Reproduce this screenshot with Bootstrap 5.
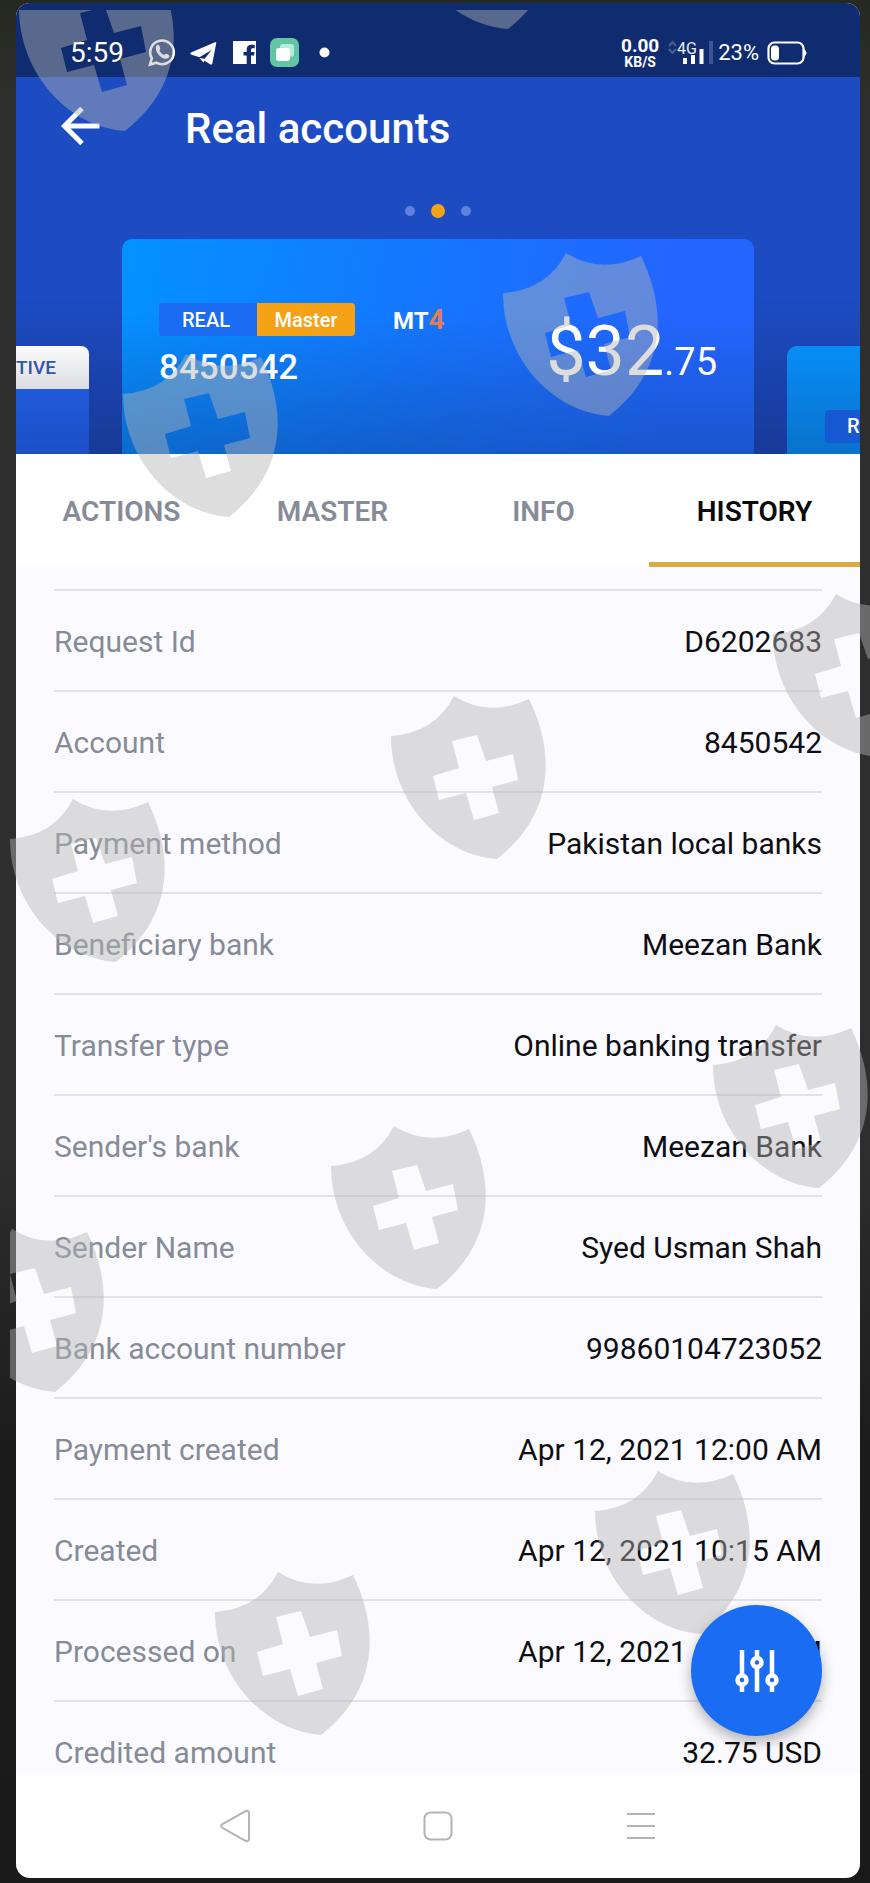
<!DOCTYPE html>
<html lang="en">
<head>
<meta charset="utf-8">
<meta name="viewport" content="width=device-width, initial-scale=1">
<title>Real accounts</title>
<link href="https://cdn.jsdelivr.net/npm/bootstrap@5.3.0/dist/css/bootstrap.min.css" rel="stylesheet">
<style>
  body { background: linear-gradient(#26291f 0, #2e2e2e 100px, #2e2e2e 1150px, #1c1c1c 1450px, #1a1a1a); font-family: Roboto, "Liberation Sans", sans-serif; overflow-x: hidden; }
  .stage { padding: 3px 10px 6px 16px; }
  .phone { border-radius: 14px; background: #fff; }
  .medium { font-weight: 500; }
  .status-bar { background: #0f2c70; height: 74px; padding: 26px 53px 0 54px; color: #fff; }
  .status-items { height: 48px; }
  .clock { font-size: 28px; line-height: 48px; width: 77px; }
  .rate { font-size: 19px; line-height: 18px; width: 40px; }
  .rate small { font-size: 14px; line-height: 14px; }
  .percent { font-size: 22px; line-height: 48px; }
  .hero { background: linear-gradient(#1c4bc2 0, #1c4bc2 220px, #183a98 377px); color: #fff; }
  .title-row { height: 100px; padding-left: 44px; }
  .title-row h1 { font-size: 42px; line-height: 56px; margin-left: 84px; padding-top: 4px; }
  .back-btn { width: 41px; height: 41px; color: #fff; }
  .dots { height: 62px; gap: 16px; padding-top: 5px; }
  .dots span { width: 10px; height: 10px; border-radius: 50%; background: #5f80dc; }
  .dots .on { width: 14px; height: 14px; background: #f5a314; }
  .slides { gap: 33px; height: 215px; }
  .side-slide { width: 73px; height: 108px; }
  .slide-prev { background: linear-gradient(#2260e8, #1d4fc6); border-radius: 0 8px 0 0; }
  .slide-prev div { height: 43px; border-radius: 0 8px 0 0; background: linear-gradient(#fbfbfb, #dcdde2); color: #2f55ad; font-size: 19px; line-height: 43px; }
  .slide-next { background: linear-gradient(#068df5, #0a72cc); border-radius: 10px 0 0 0; padding: 64px 0 0 38px; }
  .slide-next div { height: 33px; border-radius: 4px 0 0 4px; background: #1759d2; font-size: 20px; line-height: 33px; padding-left: 22px; }
  .slide-main { border-radius: 10px 10px 0 0; padding: 64px 37px 0; background: linear-gradient(rgba(16, 80, 160, 0) 35%, rgba(16, 70, 155, .5)), linear-gradient(100deg, #0492ff, #1477ff 45%, #2465ff 85%); }
  .tag { width: 98px; height: 33px; font-size: 20px; line-height: 34px; text-align: center; }
  .tag-real { background: #1b6bf3; border-radius: 4px 0 0 4px; padding-right: 4px; }
  .tag-master { background: #f5a216; border-radius: 0 4px 4px 0; }
  .platform { font-size: 24px; line-height: 34px; height: 34px; margin-left: 38px; }
  .platform span { color: #e27c5a; font-size: 28px; }
  .acct-no { font-size: 35px; line-height: 40px; margin-top: 11px; }
  .balance { font-size: 70px; line-height: 80px; margin-top: 8px; }
  .balance span { font-size: 38px; }
  .tab-link { height: 113px; font-size: 28px; line-height: 40px; padding-top: 38px; color: #868b97; text-decoration: none; border-bottom: 5px solid transparent; }
  .tab-link.current { color: #0a0a0a; border-color: #d9ab41; }
  .history { background: #fbfbff; padding: 22px 38px 1px; }
  .history table { font-size: 30px; line-height: 40px; color: #0e0e12; }
  .history th { color: #868b97; font-weight: 400; }
  .history th, .history td { border-top: 2px solid #e3e3e7; padding: 31px 0 28px; }
  .history tr:last-child > * { padding-bottom: 0; }
  .history td { text-align: right; }
  .fab { width: 131px; height: 131px; right: 38px; bottom: 38px; z-index: 3; border: 0; border-radius: 50%; background: #1a6df2; box-shadow: 0 6px 14px rgba(0, 0, 0, .3); color: #fff; }
  .nav-keys { height: 104px; }
  .nav-keys button { width: 24%; }
  .shields { z-index: 2; pointer-events: none; }
</style>
</head>
<body>
<div class="stage position-relative">
  <main class="phone overflow-hidden">
    <div class="status-bar">
      <div class="status-items d-flex align-items-center">
        <span class="clock">5:59</span>
        <svg width="184" height="30" viewBox="147 39 184 30" aria-hidden="true">
          <g fill="none" stroke="#fff" stroke-width="2.6"><path d="M150 65.500l1.800-6.200a11.800 11.800 0 1 1 4.500 4.400z"/></g>
          <path fill="#fff" d="M156.500 46.500c1-1 2.300-.8 2.800.3l1 2.400c.3.800-1.100 1.800-.8 2.500 1 2 2.500 3.300 4.400 4.100.8.300 1.700-1.400 2.500-1l2.300 1.100c1.300.7.600 2.500-.4 3.200-5.200 3.700-15-6.800-11.800-12.600z"/>
          <path fill="#fff" d="M191 53.500L215 43.300c1-.3 1.400.2 1.200 1.200L212.400 64c-.3 1.600-1.300 1.900-2.500 1.200l-6.200-4.300 7.800-10-12 7.300-7.900-2.500c-1.600-.5-1.700-1.500-.6-2.200z"/>
          <path fill="#fff" d="M199.500 59l4 4.500 2.500-3.500z"/>
          <path fill="#fff" fill-rule="evenodd" d="M233 42h23v23h-5V56.600h3l.5-3.600H251v-1.800c0-1.400.6-2 2-2h1.700v-3.400h-3c-3.300 0-5 1.900-5 4.900V53h-3.200v3.600h3.200V65H233z"/>
          <rect x="270" y="39" width="29" height="29" rx="7" fill="#62c6a4"/>
          <rect x="280" y="45" width="14" height="13" rx="3" fill="#b5eadb"/>
          <rect x="276" y="49" width="14" height="13" rx="3" fill="#fff"/>
          <circle cx="324.500" cy="53.500" r="5" fill="#fff"/>
        </svg>
        <div class="rate ms-auto d-flex flex-column align-items-center fw-bold">0.00<small>KB/S</small></div>
        <svg class="ms-2 me-1" width="46" height="26" viewBox="667 41 46 26" role="img" aria-label="4G signal">
          <g fill="none" stroke="#4a5f96" stroke-width="2"><path d="M668 47l3.500-4 3.500 4M668 50l3.500 4 3.500-4"/></g>
          <text x="676" y="55" font-size="16" fill="#e8ecf8" font-family="Roboto, sans-serif">4G</text>
          <g stroke="#fff" stroke-width="4"><path d="M684 65v-6M692 65v-9M700.500 65V50"/><path stroke="#3d5592" d="M710 65V42"/></g>
        </svg>
        <span class="percent">23%</span>
        <svg class="ms-2" width="40" height="24" viewBox="766 42 40 24" role="img" aria-label="Battery">
          <rect x="767.500" y="43.500" width="35" height="21" rx="6" fill="none" stroke="#fff" stroke-width="2.200"/>
          <rect x="770" y="46.500" width="8" height="15" rx="3.500" fill="#fff"/><path d="M803 50q5 4 0 8z" fill="#fff"/>
        </svg>
      </div>
    </div>

    <header class="hero">
      <div class="title-row d-flex align-items-center">
        <button class="back-btn btn p-0 border-0 d-flex" type="button" aria-label="Back">
          <svg width="41" height="41" viewBox="60 106 41 41" fill="none" stroke="currentColor" stroke-width="5"><path d="M99.500 125H65M82 107.500L64.500 125 82 142.500"/></svg>
        </button>
        <h1 class="mb-0 medium">Real accounts</h1>
      </div>
      <div class="dots d-flex justify-content-center align-items-center"><span></span><span class="on"></span><span></span></div>
      <div class="slides d-flex align-items-end">
        <div class="side-slide slide-prev flex-shrink-0"><div class="medium">TIVE</div></div>
        <section class="slide-main flex-fill align-self-stretch d-flex justify-content-between">
          <div>
            <div class="d-flex medium">
              <span class="tag tag-real">REAL</span><span class="tag tag-master">Master</span>
              <span class="platform fw-bold">MT<span>4</span></span>
            </div>
            <div class="acct-no medium">8450542</div>
          </div>
          <div class="balance text-nowrap">$32<span>.75</span></div>
        </section>
        <div class="side-slide slide-next flex-shrink-0 overflow-hidden"><div class="medium">R</div></div>
      </div>
    </header>

    <nav class="d-flex text-center fw-semibold">
      <a class="tab-link col-3" href="#actions">ACTIONS</a>
      <a class="tab-link col-3" href="#master">MASTER</a>
      <a class="tab-link col-3" href="#info">INFO</a>
      <a class="tab-link col-3 current" href="#history" aria-current="page">HISTORY</a>
    </nav>

    <section class="history position-relative" id="history">
      <table class="w-100">
        <tbody>
          <tr><th scope="row">Request Id</th><td>D6202683</td></tr>
          <tr><th scope="row">Account</th><td>8450542</td></tr>
          <tr><th scope="row">Payment method</th><td>Pakistan local banks</td></tr>
          <tr><th scope="row">Beneficiary bank</th><td>Meezan Bank</td></tr>
          <tr><th scope="row">Transfer type</th><td>Online banking transfer</td></tr>
          <tr><th scope="row">Sender's bank</th><td>Meezan Bank</td></tr>
          <tr><th scope="row">Sender Name</th><td>Syed Usman Shah</td></tr>
          <tr><th scope="row">Bank account number</th><td>99860104723052</td></tr>
          <tr><th scope="row">Payment created</th><td>Apr 12, 2021 12:00 AM</td></tr>
          <tr><th scope="row">Created</th><td>Apr 12, 2021 10:15 AM</td></tr>
          <tr><th scope="row">Processed on</th><td>Apr 12, 2021 09:15 AM</td></tr>
          <tr><th scope="row">Credited amount</th><td>32.75 USD</td></tr>
        </tbody>
      </table>
      <button class="fab position-absolute d-flex align-items-center justify-content-center" type="button" aria-label="Filter">
        <svg width="44" height="44" viewBox="0 0 44 44" fill="none" stroke="currentColor" stroke-width="4.500">
          <path d="M7 1v25M7 36v7M22 1v7M22 19v24M37 1v25M37 36v7"/><circle cx="7" cy="31" r="4.500"/><circle cx="22" cy="13.500" r="4.500"/><circle cx="37" cy="31" r="4.500"/>
        </svg>
      </button>
    </section>

    <div class="nav-keys d-flex justify-content-center">
      <button class="btn border-0" type="button" aria-label="Back key"><svg width="32" height="34" viewBox="0 0 32 34" fill="none" stroke="#b4b4b4" stroke-width="2"><path d="M3.500 15.200L26 2.500q4-2 4 2v25q0 4-4 2L3.500 18.800q-3-1.800 0-3.600z"/></svg></button>
      <button class="btn border-0" type="button" aria-label="Home key"><svg width="30" height="30" viewBox="0 0 30 30" fill="none" stroke="#b4b4b4" stroke-width="2"><rect x="1.500" y="1.500" width="27" height="27" rx="6"/></svg></button>
      <button class="btn border-0" type="button" aria-label="Menu key"><svg width="28" height="28" viewBox="0 0 28 28" stroke="#b4b4b4" stroke-width="2"><path d="M0 2h28M0 14h28M0 26h28"/></svg></button>
    </div>
  </main>

  <svg class="shields position-absolute top-0 start-0 w-100" viewBox="0 0 870 1883" aria-hidden="true">
    <defs>
      <path id="shield" fill="#b4b4b4" fill-opacity=".45" fill-rule="evenodd" d="M1 40Q45 37 64 0 99 22 139 3C163 52 168 115 107 163 50 159 1 105 1 40ZM87 39L62 45 69 72 43 80 49 104 76 97 84 124 109 117 102 91 128 84 123 58 96 65Z"/>
      <clipPath id="edge"><path d="M10 10H870V1883H10z"/></clipPath>
    </defs>
    <g clip-path="url(#edge)">
      <use href="#shield" x="18" y="-32"/><use href="#shield" x="401" y="-134"/>
      <use href="#shield" x="502" y="253"/><use href="#shield" x="122" y="354"/>
      <use href="#shield" x="772" y="594"/><use href="#shield" x="390" y="696"/>
      <use href="#shield" x="9" y="799"/><use href="#shield" x="712" y="1025"/>
      <use href="#shield" x="330" y="1126"/><use href="#shield" x="-52" y="1229"/>
      <use href="#shield" x="594" y="1471"/><use href="#shield" x="214" y="1572"/>
    </g>
  </svg>
</div>
<script src="https://cdn.jsdelivr.net/npm/bootstrap@5.3.0/dist/js/bootstrap.bundle.min.js"></script>
</body>
</html>
